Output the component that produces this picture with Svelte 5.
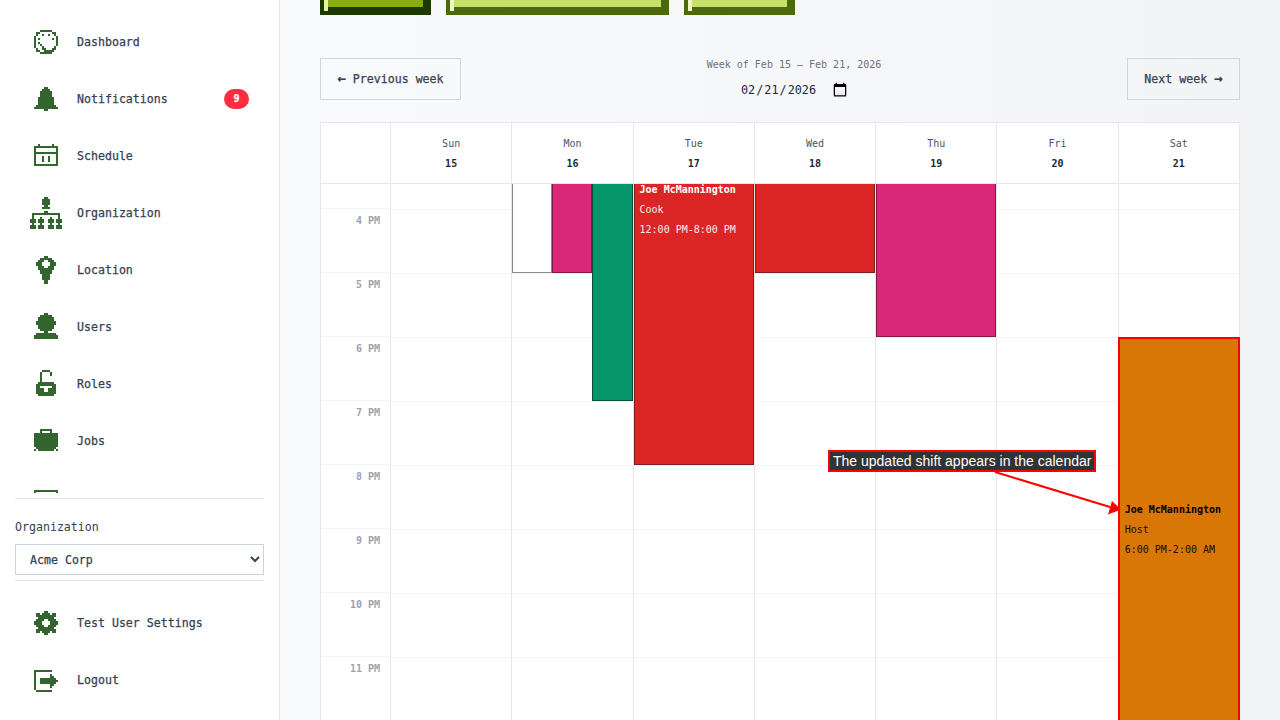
<script>
  // pixel icons on a 16x16 grid, x/y = offset of the drawing inside the grid
  const icons = {
    dashboard: { x: 2, y: 2, rows: ['...xxxxxx...','.xx......xx.','.x..x..x..x.','x..........x','x.x......x.x','x..........x','x.x........x','x..x.......x','x...x.....x.','.x..xx...xx.','.xx..xxxxx..','...xxxxxx...'] },
    bell: { x: 2, y: 2, rows: ['.....xx.....','....xxxx....','...xxxxxx...','...xxxxxx...','...xxxxxx...','..xxxxxxxx..','..xxxxxxxx..','..xxxxxxxx..','..xxxxxxxx..','.xxxxxxxxxx.','xxxxxxxxxxxx','.....xx.....'] },
    calendar: { x: 2, y: 2, rows: ['..x......x..','xxxxxxxxxxxx','x..........x','x..........x','xxxxxxxxxxxx','x..........x','x...x..x...x','x...x..x...x','x...x..x...x','x..........x','xxxxxxxxxxxx'] },
    org: { x: 0, y: 0, rows: ['.......xx.......','......xxxx......','......xxxx......','......xxxx......','.......xx.......','......xxxx......','................','.......xx.......','.xxxxxxxxxxxxxx.','.x............x.','.x...x....x...x.','xxx.xxx..xxx.xxx','xxx.xxx..xxx.xxx','.x...x....x...x.','xxx.xxx..xxx.xxx','xxx.xxx..xxx.xxx'] },
    pin: { x: 3, y: 1, rows: ['....xx....','..xxxxxx..','.xxx..xxx.','xxx....xxx','xxx....xxx','.xxx..xxx.','.xxxxxxxx.','..xxxxxx..','..xxxxxx..','...xxxx...','...xxxx...','...xxxx...','....xx....','....xx....'] },
    user: { x: 2, y: 1, rows: ['.....xx.....','...xxxxxx...','..xxxxxxxx..','..xxxxxxxx..','.xxxxxxxxxx.','.xxxxxxxxxx.','..xxxxxxxx..','..xxxxxxxx..','...xxxxxx...','.....xx.....','.xxxxxxxxxx.','xxxxxxxxxxxx','xxxxxxxxxxxx'] },
    lock: { x: 3, y: 1, rows: ['...xxxx...','..x....x..','..x....x..','..x.......','..x.......','..x.......','.xxxxxxxx.','xxxxxxxxxx','xx......xx','xxxx..xxxx','xxxx..xxxx','xxxxxxxxxx','.xxxxxxxx.'] },
    case: { x: 2, y: 2, rows: ['...xxxxxx...','...x....x...','xxxxxxxxxxxx','xxxxxxxxxxxx','xxxxxxxxxxxx','xxxxxxxxxxxx','xxxxxxxxxxxx','xxxxxxxxxxxx','xxxxxxxxxxxx','.xxxxxxxxxx.','x.xxxxxxxx.x'] },
    box: { x: 2, y: 4, rows: ['xxxxxxxxxxxx','x..........x'] },
    gear: { x: 2, y: 2, rows: ['.....xx.....','.xx.xxxx.xx.','.xxxxxxxxxx.','..xxxxxxxx..','.xxxx..xxxx.','xxxx....xxxx','xxxx....xxxx','.xxxx..xxxx.','..xxxxxxxx..','.xxxxxxxxxx.','.xx.xxxx.xx.','.....xx.....'] },
    logout: { x: 2, y: 3, rows: ['xxxxxxxxx...','x...........','x.......x...','x.......xx..','x..xxxxxxxx.','x..xxxxxxxxx','x..xxxxxxxx.','x.......xx..','x.......x...','x...........','.xxxxxxxx...'] }
  };

  function pixels(icon) {
    let d = '';
    icon.rows.forEach((row, r) => {
      [...row].forEach((c, i) => {
        if (c === 'x') d += `M${i + icon.x} ${r + icon.y}h1v1h-1z`;
      });
    });
    return d;
  }

  const navItems = [
    { label: 'Dashboard', icon: 'dashboard' },
    { label: 'Notifications', icon: 'bell', badge: 9 },
    { label: 'Schedule', icon: 'calendar' },
    { label: 'Organization', icon: 'org' },
    { label: 'Location', icon: 'pin' },
    { label: 'Users', icon: 'user' },
    { label: 'Roles', icon: 'lock' },
    { label: 'Jobs', icon: 'case' },
    { label: '', icon: 'box' }
  ];
  const footerItems = [
    { label: 'Test User Settings', icon: 'gear' },
    { label: 'Logout', icon: 'logout' }
  ];

  const days = [
    { name: 'Sun', date: 15, events: [] },
    { name: 'Mon', date: 16, events: [
      { start: 9, end: 17, color: '#ffffff', border: '#8a8a8a', lane: 0, lanes: 3 },
      { start: 9, end: 17, color: '#db2777', border: '#831843', lane: 1, lanes: 3 },
      { start: 11, end: 19, color: '#059669', border: '#064e3b', lane: 2, lanes: 3 }
    ] },
    { name: 'Tue', date: 17, events: [
      { start: 12, end: 20, color: '#dc2626', border: '#7f1d1d', text: '#fff', who: 'Joe McMannington', job: 'Cook', time: '12:00 PM-8:00 PM' }
    ] },
    { name: 'Wed', date: 18, events: [
      { start: 9, end: 17, color: '#dc2626', border: '#7f1d1d' }
    ] },
    { name: 'Thu', date: 19, events: [
      { start: 10, end: 18, color: '#db2777', border: '#831843' }
    ] },
    { name: 'Fri', date: 20, events: [] },
    { name: 'Sat', date: 21, events: [
      { start: 18, end: 24, color: '#d97706', border: '#ff0000', wide: true, text: '#000', who: 'Joe McMannington', job: 'Host', time: '6:00 PM-2:00 AM' }
    ] }
  ];

  const hours = ['', '4 PM', '5 PM', '6 PM', '7 PM', '8 PM', '9 PM', '10 PM', '11 PM'];
  const firstHour = 15;
  const hourHeight = 64;

  function eventStyle(e) {
    const lanes = e.lanes || 1;
    const lane = e.lane || 0;
    const pos = e.wide
      ? 'left:-1px;width:calc(100% + 2px);'
      : `left:${(lane / lanes) * 100}%;width:${100 / lanes}%;`;
    return `top:${(e.start - firstHour) * hourHeight}px;height:${(e.end - e.start) * hourHeight}px;` + pos +
      `background:${e.color};border-color:${e.border};color:${e.text || '#000'}`;
  }
</script>

{#snippet navLink(item)}
  <a class="nav-item" href="#top">
    <svg class="pix" viewBox="0 0 16 16" width="32" height="32" aria-hidden="true"><path d={pixels(icons[item.icon])} /></svg>
    <span>{item.label}</span>
    {#if item.badge}<span class="badge">{item.badge}</span>{/if}
  </a>
{/snippet}

<div class="layout">
  <aside class="sidebar">
    <nav class="nav">
      {#each navItems as item}
        {@render navLink(item)}
      {/each}
    </nav>
    <div class="org">
      <label for="org-select">Organization</label>
      <select id="org-select">
        <option>Acme Corp</option>
      </select>
    </div>
    <div class="footer-nav">
      {#each footerItems as item}
        {@render navLink(item)}
      {/each}
    </div>
  </aside>

  <main class="main">
    <div class="actions">
      <div class="block dark" style="width:111px"></div>
      <div class="block" style="width:223px"></div>
      <div class="block" style="width:111px"></div>
    </div>

    <div class="week-nav">
      <button class="week-btn prev"><span class="btn-arrow">←</span> Previous week</button>
      <div class="week-mid">
        <div class="week-label">Week of Feb 15 – Feb 21, 2026</div>
        <input class="date" type="date" value="2026-02-21" />
      </div>
      <button class="week-btn next">Next week <span class="btn-arrow">→</span></button>
    </div>

    <section class="calendar">
      <div class="head">
        <div class="head-cell"></div>
        {#each days as day}
          <div class="head-cell">
            <div class="day-name">{day.name}</div>
            <div class="day-date">{day.date}</div>
          </div>
        {/each}
      </div>
      <div class="body">
        <div class="grid">
          <div class="time-col">
            {#each hours as h}
              <div class="time-cell">{h}</div>
            {/each}
          </div>
          {#each days as day}
            <div class="day-col">
              {#each hours as h}
                <div class="hour-cell"></div>
              {/each}
              {#each day.events as e}
                <div class="event" class:wide={e.wide} style={eventStyle(e)}>
                  {#if e.who}
                    <strong>{e.who}</strong>
                    <span>{e.job}</span>
                    <span>{e.time}</span>
                  {/if}
                </div>
              {/each}
            </div>
          {/each}
        </div>
      </div>
    </section>
  </main>

  <div class="note">The updated shift appears in the calendar</div>
  <svg class="arrow" width="1280" height="720" aria-hidden="true">
    <line x1="995" y1="472" x2="1110" y2="507" stroke="#f00" stroke-width="2" />
    <path d="M1121 509.5L1108 514.5L1112 501z" fill="#f00" />
  </svg>
</div>

<style>
  :global(body) {
    overflow: hidden;
  }

  .layout {
    display: flex;
    height: 720px;
    overflow: hidden;
    font-family: "DejaVu Sans Mono", "Liberation Mono", monospace;
    color: #374151;
  }

  .sidebar {
    width: 280px;
    flex-shrink: 0;
    box-sizing: border-box;
    display: flex;
    flex-direction: column;
    background: #fff;
    border-right: 1px solid #e5e7eb;
    box-shadow: 1px 0 2px rgba(0, 0, 0, 0.05);
  }

  .nav {
    height: 480px;
    padding-top: 13px;
    overflow: hidden;
  }

  .nav-item {
    display: flex;
    align-items: center;
    gap: 15px;
    height: 57px;
    margin: 0 30px;
    font-size: 11.6px;
    -webkit-text-stroke: 0.25px;
    color: #374151;
    text-decoration: none;
  }

  .pix {
    flex-shrink: 0;
    fill: #33652f;
    shape-rendering: crispEdges;
  }

  .badge {
    margin-left: auto;
    width: 25px;
    height: 20px;
    border-radius: 10px;
    background: #ff2d3d;
    color: #fff;
    font-size: 10px;
    font-weight: 700;
    line-height: 20px;
    text-align: center;
  }

  .org {
    margin: 5px 15px 0;
    padding: 20px 0 5px;
    border-top: 1px solid #e5e7eb;
    border-bottom: 1px solid #e5e7eb;
    display: flex;
    flex-direction: column;
  }

  .org label {
    font-size: 11.6px;
    line-height: 16px;
    margin-bottom: 9px;
    color: #374151;
  }

  .org select {
    height: 31px;
    box-sizing: border-box;
    border: 1px solid #cbd5e1;
    border-radius: 0;
    background: #fff;
    padding: 0 10px;
    font-family: inherit;
    font-size: 11.6px;
    -webkit-text-stroke: 0.25px;
    color: #374151;
  }

  .footer-nav {
    margin-top: 13px;
  }

  .main {
    flex: 1;
    min-width: 0;
    padding: 0 40px;
    background: linear-gradient(90deg, #f9fafc, #f3f4f6);
    overflow: hidden;
  }

  .actions {
    display: flex;
    align-items: flex-end;
    gap: 15px;
    height: 15px;
    overflow: hidden;
    margin-bottom: 43px;
  }

  .block {
    flex-shrink: 0;
    height: 40px;
    box-sizing: border-box;
    border: 4px solid #4a6a0c;
    background: #c8e06a;
    box-shadow: inset 4px 4px 0 #eef8c0, inset -4px -4px 0 #4a6a0c;
  }

  .block.dark {
    border-color: #1a3a00;
    background: #8aab0e;
    box-shadow: inset 4px 4px 0 #e4f2a6, inset -4px -4px 0 #1a3a00;
  }

  .week-nav {
    display: flex;
    justify-content: space-between;
    align-items: flex-start;
    height: 42px;
    margin-bottom: 22px;
  }

  .week-btn {
    height: 42px;
    box-sizing: border-box;
    border: 1px solid #d1d5db;
    border-radius: 0;
    background: transparent;
    padding: 0 10px;
    font-family: inherit;
    font-size: 11.6px;
    -webkit-text-stroke: 0.25px;
    color: #374151;
  }

  .btn-arrow {
    font-size: 14px;
    line-height: 10px;
    font-weight: 700;
  }

  .week-btn.prev {
    width: 141px;
  }

  .week-btn.next {
    width: 113px;
  }

  .week-mid {
    display: flex;
    flex-direction: column;
    align-items: center;
  }

  .week-label {
    font-size: 10px;
    line-height: 14px;
    color: #6b7280;
  }

  .date {
    margin-top: 7px;
    height: 22px;
    padding: 0;
    border: 0;
    background: transparent;
    font-family: inherit;
    font-size: 11.8px;
    color: #1f2937;
  }

  .date::-webkit-calendar-picker-indicator {
    width: 16px;
    height: 16px;
    padding: 0;
    margin-left: 0;
  }

  .calendar {
    width: 920px;
    box-sizing: border-box;
    border-left: 1px solid #e5e7eb;
    border-top: 1px solid #e5e7eb;
    background: #fff;
  }

  .head,
  .grid {
    display: grid;
    grid-template-columns: 70px repeat(7, 1fr);
  }

  .head {
    border-bottom: 1px solid #e5e7eb;
  }

  .head-cell {
    height: 60px;
    box-sizing: border-box;
    padding-top: 11px;
    border-right: 1px solid #e5e7eb;
    text-align: center;
    font-size: 10px;
    line-height: 20px;
  }

  .day-name {
    color: #4b5563;
  }

  .day-date {
    font-weight: 700;
    color: #1f2937;
  }

  .body {
    height: 537px;
    overflow: hidden;
  }

  .grid {
    margin-top: -39px;
  }

  .time-col,
  .day-col {
    border-right: 1px solid #e5e7eb;
  }

  .time-col {
    margin-top: -1px;
  }

  .time-cell {
    height: 64px;
    box-sizing: border-box;
    border-top: 1px solid #f3f4f6;
    padding: 4px 10px 0 0;
    line-height: 16px;
    text-align: right;
    font-size: 10px;
    font-weight: 700;
    color: #9ca3af;
  }

  .day-col {
    position: relative;
    min-width: 0;
  }

  .hour-cell {
    height: 64px;
    box-sizing: border-box;
    border-top: 1px solid #f3f4f6;
  }

  .event {
    position: absolute;
    box-sizing: border-box;
    display: flex;
    flex-direction: column;
    justify-content: center;
    padding: 2px 5px 0;
    border: 1px solid;
    font-size: 10px;
    line-height: 20px;
    overflow: hidden;
  }

  .event.wide {
    border-width: 2px 2px 0;
    padding-top: 0;
  }

  .event span {
    opacity: 0.9;
  }

  .note {
    position: absolute;
    left: 828px;
    top: 450px;
    box-sizing: border-box;
    width: 268px;
    height: 22px;
    border: 2px solid #f00;
    background: #333;
    padding: 0 3px;
    font-family: "Liberation Sans", sans-serif;
    font-size: 14px;
    line-height: 18px;
    color: #fff;
    white-space: nowrap;
  }

  .arrow {
    position: absolute;
    left: 0;
    top: 0;
    pointer-events: none;
  }
</style>
